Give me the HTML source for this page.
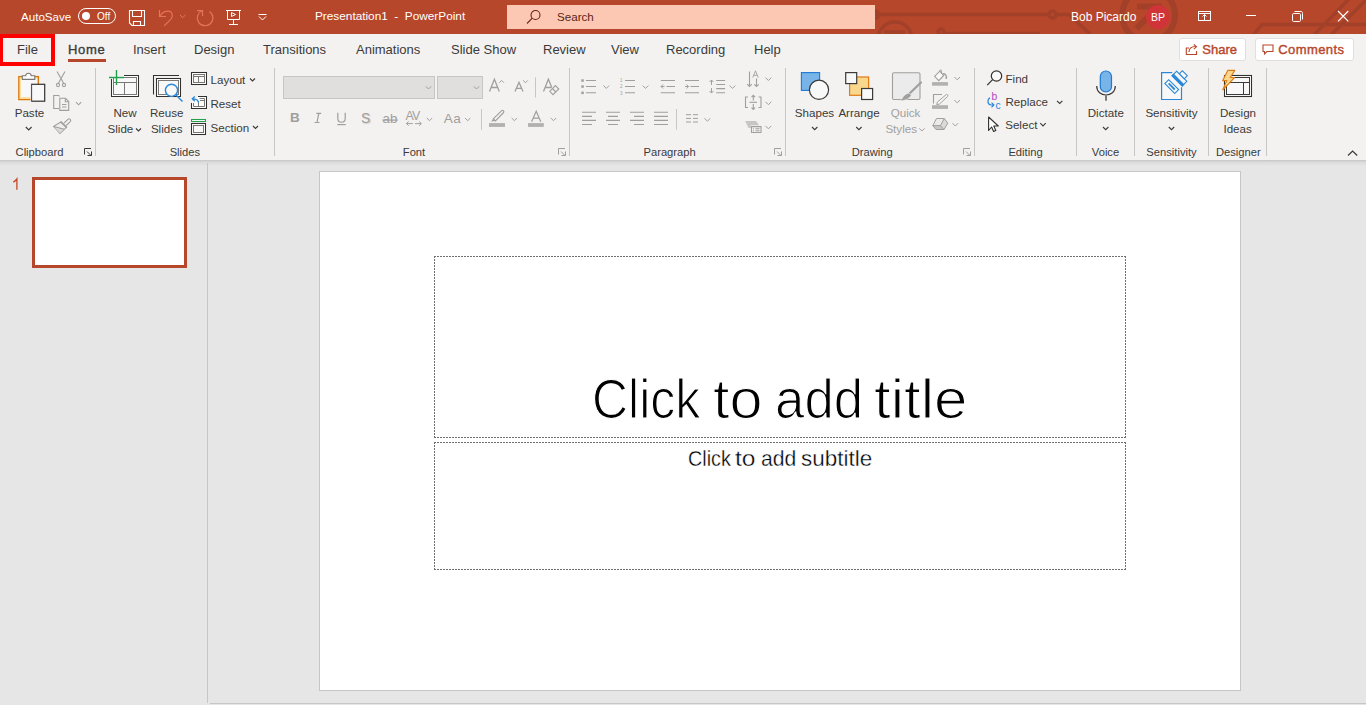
<!DOCTYPE html>
<html><head><meta charset="utf-8">
<style>
*{margin:0;padding:0;box-sizing:border-box}
html,body{width:1366px;height:705px;overflow:hidden;background:#e6e6e6;font-family:"Liberation Sans",sans-serif;position:relative}
.a{position:absolute;white-space:nowrap;line-height:1}
svg.a{overflow:visible}
#title{left:0;top:0;width:1366px;height:34px;background:#b7472a}
#tabs{left:0;top:34px;width:1366px;height:32px;background:#f3f2f1}
#ribbon{left:0;top:66px;width:1366px;height:94px;background:#f3f2f1}
#shadow{left:0;top:160px;width:1366px;height:6px;background:linear-gradient(#c6c6c6,#dcdcdc 40%,#e6e6e6)}
.tt{color:#fff;font-size:12px}
.tab{font-size:13px;color:#3b3a39;top:43px}
.t{font-size:11.6px;color:#3b3a39}
.g{font-size:11.2px;color:#3b3a39;top:147px}
.sep{position:absolute;width:1px;background:#c8c6c4;top:68px;height:88px}
.dis{color:#a19f9d}
.chev{position:absolute}
</style></head><body>
<div id="title" class="a"></div>
<div id="tabs" class="a"></div>
<div id="ribbon" class="a"></div>
<div id="shadow" class="a"></div>

<!-- ===== TITLE BAR ===== -->

<!-- title bar pattern -->
<svg class="a" style="left:0;top:0" width="1366" height="34">
<defs><clipPath id="tb"><rect x="875" y="0" width="491" height="34"/></clipPath></defs>
<g clip-path="url(#tb)" fill="none" stroke="#a2402a" stroke-width="3.5">
<path d="M870 14.5 H1049"/>
<circle cx="1052.5" cy="14.5" r="3.5"/>
<path d="M1056 14.5 H1069 L1090 34"/>
<circle cx="875.5" cy="14.5" r="3.5"/>
<circle cx="895" cy="39" r="17"/>
<path d="M884 32 H905"/>
<circle cx="941" cy="32" r="3"/>
<path d="M944 33.5 H1040"/>
<circle cx="1148.6" cy="15" r="26.4" stroke-width="6"/>
<path d="M1136.5 28.5 L1158 7 M1137 6.5 H1162" stroke-width="6"/>
<path d="M1251.5 37 L1262 24.5 H1370"/>
<path d="M1313 36 L1350 -2 M1330 36 L1368 -2"/>
</g>
</svg>
<div class="a tt" style="left:21px;top:11px;font-size:11.6px">AutoSave</div>

<div class="a" style="left:78px;top:8px;width:38px;height:16px;border:1px solid #fff;border-radius:8px"></div>
<div class="a" style="left:82px;top:12px;width:8px;height:8px;border-radius:50%;background:#fff"></div>
<div class="a tt" style="left:97px;top:12px;font-size:10px">Off</div>

<!-- QAT icons -->
<svg class="a" style="left:128px;top:9px" width="18" height="18" viewBox="0 0 18 18">
<g fill="none" stroke="#fff" stroke-width="1.1">
<path d="M1.5 1.5 H16.5 V16.5 H4 L1.5 14 Z"/>
<path d="M4.5 1.5 V7.5 H13.5 V1.5"/>
<path d="M5.5 16.5 V12.5 H12.5 V16.5"/>
</g></svg>
<svg class="a" style="left:0;top:0" width="260" height="34">
<g fill="none" stroke="#e8735c" stroke-width="1.2">
<path d="M159.5 10 V16.5 H166"/>
<path d="M160.3 15.8 C163 10.5 172.5 8.5 172.3 15.8 C172.2 18 171 19.3 169.8 20.4 L164.2 25.8"/>
<path d="M180 15 L182.7 17.7 L185.4 15" stroke-width="1"/>
<path d="M197 10.6 H202.5 V16"/>
<path d="M209.5 11.5 A7.8 7.8 0 1 1 202 10.8"/>
</g></svg>
<svg class="a" style="left:0;top:0" width="280" height="34">
<g fill="none" stroke="#fff" stroke-width="1">
<path d="M226 10.5 H241"/>
<path d="M227.5 10.5 V19.5 H239.5 V10.5"/>
<path d="M233.5 19.5 V24.5 M229 24.5 H238"/>
<path d="M231.5 12.5 L235.5 14.5 L231.5 16.5 Z"/>
<path d="M258.5 14.5 H266.5"/>
<path d="M259 16.5 L262.5 20 L266 16.5"/>
</g></svg>
<div class="a tt" style="left:315px;top:11px;font-size:11.8px">Presentation1&nbsp; -&nbsp; PowerPoint</div>
<div class="a" style="left:507px;top:5px;width:368px;height:24px;background:#fcc8b4"></div>
<svg class="a" style="left:526px;top:9px" width="16" height="16" viewBox="0 0 16 16">
<g fill="none" stroke="#6b2413" stroke-width="1.1">
<circle cx="9.5" cy="6" r="4.5"/>
<path d="M6.3 9.2 L1 14.5"/>
</g></svg>
<div class="a" style="left:557px;top:11px;font-size:11.6px;color:#5e1f10">Search</div>
<div class="a tt" style="left:1071px;top:11px;font-size:12px">Bob Picardo</div>
<div class="a" style="left:1146px;top:5px;width:24px;height:24px;border-radius:50%;background:#d13438"></div>
<div class="a" style="left:1146px;top:12px;width:24px;text-align:center;font-size:10.5px;color:#fff">BP</div>
<svg class="a" style="left:0;top:0" width="1366" height="34">
<g fill="none" stroke="#fff" stroke-width="1">
<rect x="1198.5" y="11.5" width="12" height="9"/>
<path d="M1199 13.5 H1210"/>
<path d="M1204.5 20.5 V14.5 M1202.5 16.5 L1204.5 14.5 L1206.5 16.5"/>
</g></svg>
<div class="a" style="left:1246px;top:15px;width:10px;height:1px;background:#fff"></div>
<svg class="a" style="left:0;top:0" width="1366" height="34">
<g fill="none" stroke="#fff" stroke-width="1">
<rect x="1292.5" y="13.5" width="8" height="8" rx="1.2"/>
<path d="M1294.5 11.5 H1300 A1.8 1.8 0 0 1 1302.5 13.5 V19.5"/>
<path d="M1338 11 L1348.3 21.3 M1348.3 11 L1338 21.3" stroke-width="1.2"/>
</g></svg>



<!-- ===== TABS ===== -->
<div class="a tab" style="left:17px">File</div>
<div class="a tab" style="left:68px;letter-spacing:0.7px;-webkit-text-stroke:0.35px #3b3a39">Home</div>
<div class="a" style="left:68px;top:59px;width:38px;height:3px;background:#b7472a"></div>
<div class="a tab" style="left:133px">Insert</div>
<div class="a tab" style="left:194px">Design</div>
<div class="a tab" style="left:263px">Transitions</div>
<div class="a tab" style="left:356px">Animations</div>
<div class="a tab" style="left:451px">Slide Show</div>
<div class="a tab" style="left:543px">Review</div>
<div class="a tab" style="left:611px">View</div>
<div class="a tab" style="left:666px">Recording</div>
<div class="a tab" style="left:754px">Help</div>
<!-- red File highlight -->
<div class="a" style="left:-1px;top:34px;width:56px;height:32px;border:4px solid #f00"></div>


<!-- ===== RIBBON ===== -->
<div class="a" style="left:95px;top:68px;width:1px;height:88px;background:#c8c6c4"></div>
<div class="a" style="left:274px;top:68px;width:1px;height:88px;background:#c8c6c4"></div>
<div class="a" style="left:569px;top:68px;width:1px;height:88px;background:#c8c6c4"></div>
<div class="a" style="left:785px;top:68px;width:1px;height:88px;background:#c8c6c4"></div>
<div class="a" style="left:974px;top:68px;width:1px;height:88px;background:#c8c6c4"></div>
<div class="a" style="left:1076px;top:68px;width:1px;height:88px;background:#c8c6c4"></div>
<div class="a" style="left:1134px;top:68px;width:1px;height:88px;background:#c8c6c4"></div>
<div class="a" style="left:1208px;top:68px;width:1px;height:88px;background:#c8c6c4"></div>
<div class="a" style="left:1266px;top:68px;width:1px;height:88px;background:#c8c6c4"></div>
<div class="a" style="left:-0.5px;top:147px;width:80px;text-align:center;font-size:11.2px;color:#3b3a39">Clipboard</div>
<div class="a" style="left:144.9px;top:147px;width:80px;text-align:center;font-size:11.2px;color:#3b3a39">Slides</div>
<div class="a" style="left:374.0px;top:147px;width:80px;text-align:center;font-size:11.2px;color:#3b3a39">Font</div>
<div class="a" style="left:629.6px;top:147px;width:80px;text-align:center;font-size:11.2px;color:#3b3a39">Paragraph</div>
<div class="a" style="left:832.2px;top:147px;width:80px;text-align:center;font-size:11.2px;color:#3b3a39">Drawing</div>
<div class="a" style="left:985.5px;top:147px;width:80px;text-align:center;font-size:11.2px;color:#3b3a39">Editing</div>
<div class="a" style="left:1065.5px;top:147px;width:80px;text-align:center;font-size:11.2px;color:#3b3a39">Voice</div>
<div class="a" style="left:1131.5px;top:147px;width:80px;text-align:center;font-size:11.2px;color:#3b3a39">Sensitivity</div>
<div class="a" style="left:1198.3px;top:147px;width:80px;text-align:center;font-size:11.2px;color:#3b3a39">Designer</div>
<div class="a" style="left:-10.5px;top:107px;width:80px;text-align:center;font-size:11.6px;color:#3b3a39">Paste</div>
<div class="a" style="left:85.0px;top:107px;width:80px;text-align:center;font-size:11.6px;color:#3b3a39">New</div>
<div class="a" style="left:107.5px;top:123px;font-size:11.6px;color:#3b3a39;">Slide</div>
<div class="a" style="left:126.69999999999999px;top:107px;width:80px;text-align:center;font-size:11.6px;color:#3b3a39">Reuse</div>
<div class="a" style="left:126.69999999999999px;top:123px;width:80px;text-align:center;font-size:11.6px;color:#3b3a39">Slides</div>
<div class="a" style="left:210.5px;top:74px;font-size:11.6px;color:#3b3a39;">Layout</div>
<div class="a" style="left:210.5px;top:97.5px;font-size:11.6px;color:#3b3a39;">Reset</div>
<div class="a" style="left:210.5px;top:122px;font-size:11.6px;color:#3b3a39;">Section</div>
<svg class="a" style="left:0;top:0" width="1366" height="165">
<!-- chevrons -->
<g fill="none" stroke="#3b3a39" stroke-width="1.1">
<path d="M25.8 127 L28.7 129.9 L31.6 127"/>
<path d="M136 128.5 L138.5 131 L141 128.5"/>
<path d="M250 78.5 L252.5 81 L255 78.5"/>
<path d="M253 126 L255.5 128.5 L258 126"/>
</g>
<!-- Paste -->
<rect x="18.8" y="76.6" width="19.6" height="23" fill="#fde0a4" stroke="#d9780f" stroke-width="1.3"/>
<rect x="21" y="78.5" width="16" height="18.5" fill="#f8f8f8"/>
<path d="M22.3 79.4 V75.7 H25.7 C26 72.5 30.8 72.5 31.2 75.7 H34.8 V79.4 Z" fill="#fff" stroke="#7a7876" stroke-width="1.1"/>
<rect x="31.5" y="84.3" width="13.2" height="16.9" fill="#f8f8f8" stroke="#323130" stroke-width="1.2"/>
<path d="M30.8 84 V101.8" stroke="#fff" stroke-width="0.6"/>
<!-- disabled clipboard icons -->
<g fill="none" stroke="#a19f9d" stroke-width="1.1">
<path d="M57 71.5 L63.5 83 M65 71.5 L58.5 83"/>
<circle cx="58" cy="85" r="1.6"/><circle cx="64" cy="85" r="1.6"/>
<path d="M59.5 96.5 L58.8 95.5 H53.7 V108.5 H59"/>
<path d="M59.8 98.3 H65.5 L68.7 101.5 V110.4 H59.8 Z"/>
<path d="M65.3 98.5 V101.8 H68.5"/>
<path d="M62 104.5 H66.5 M62 107 H66.5"/>
<path d="M76 102.2 L78.6 104.8 L81.2 102.2"/>
<path d="M64 123.2 L67.9 119.3 A1.6 1.6 0 0 1 70.2 121.6 L66.3 125.5" fill="#f3f2f1"/>
<path d="M60.9 122 L66.5 127.3 L60 133.5 L53.6 126.3 Z" fill="#efeeed"/>
<path d="M55 128 L60 133 L65 128.5 Z" fill="#dcdad8" stroke="none"/>
<path d="M53.8 126.5 L64.3 129.3"/>
<path d="M60.6 121.7 L66.8 127.6" stroke-width="1.6"/>
</g>
<defs><path id="launch" d="M0.5 6.5 V0.5 H7 M3 3.5 L7.2 7.7 M7.5 3.5 V7.5 H3.5" fill="none" stroke="#3b3a39" stroke-width="1"/><path id="launch2" d="M0.5 6.5 V0.5 H7 M3 3.5 L7.2 7.7 M7.5 3.5 V7.5 H3.5" fill="none" stroke="#a19f9d" stroke-width="1"/></defs>
<use href="#launch" x="84" y="148"/><g stroke="#a19f9d"><use href="#launch2" x="558" y="148"/><use href="#launch2" x="774" y="148"/><use href="#launch2" x="963" y="148"/></g>
<!-- New slide -->
<rect x="112" y="76" width="26" height="20" fill="#fff"/>
<path d="M124 75.5 H138.5 V96.5 H111.5 V79" fill="none" stroke="#323130" stroke-width="1.05"/>
<rect x="113.5" y="77.5" width="23" height="17" fill="#f8f8f8" stroke="#7a7876" stroke-width="1"/>
<path d="M113.5 82.5 H136.5 M124.5 82.5 V94.5" stroke="#7a7876" stroke-width="1"/>
<path d="M109 77.5 H124 M116.5 70 V85" stroke="#23a04b" stroke-width="1.4"/>
<!-- Reuse slides -->
<path d="M153.5 94.6 V75.5 H179" fill="none" stroke="#323130" stroke-width="1.05"/>
<rect x="156" y="78" width="25" height="19" fill="#fff"/>
<rect x="156.5" y="78.5" width="24" height="18" fill="none" stroke="#323130" stroke-width="1.05"/>
<rect x="158.5" y="80.5" width="20" height="14" fill="#f8f8f8" stroke="#7a7876" stroke-width="1"/>
<circle cx="171.5" cy="90.3" r="6.1" fill="#f8f8f8" stroke="#2b88d8" stroke-width="1.4"/>
<path d="M175.8 94.8 L182.5 101.5" stroke="#2b88d8" stroke-width="1.4"/>
<!-- Layout / Reset / Section -->
<rect x="191.5" y="72.5" width="15" height="12" fill="#fff" stroke="#323130" stroke-width="1.05"/>
<rect x="193.5" y="74.5" width="11" height="8" fill="#f8f8f8" stroke="#7a7876" stroke-width="1"/>
<path d="M193.5 76.5 H204.5 M198.5 76.5 V82.5" stroke="#7a7876" stroke-width="1"/>
<path d="M198 96.5 H206.5 V108.5 H191.5 V103" fill="#fff" stroke="#323130" stroke-width="1.05"/>
<path d="M193.5 103 V106.5 H204.5 V98.5 H199.5 M198.5 106.5 V101 M204.5 100.5 H200" fill="none" stroke="#7a7876" stroke-width="1"/>
<path d="M198.3 102.5 C198.3 99.5 196.5 98.8 192.5 98.8 M194.8 96.5 L192.3 98.8 L194.8 101.2" fill="none" stroke="#2b88d8" stroke-width="1.3"/>
<rect x="191.5" y="119.5" width="14" height="2" fill="#fff" stroke="#23a04b" stroke-width="1.05"/>
<rect x="191.5" y="123.5" width="14" height="11" fill="#fff" stroke="#323130" stroke-width="1.05"/>
<rect x="193.5" y="125.5" width="10" height="7" fill="#f8f8f8" stroke="#7a7876" stroke-width="1"/>
</svg>
<svg class="a" style="left:0;top:0" width="1366" height="165">
<!-- Font group -->
<rect x="283.5" y="76.5" width="151" height="22" fill="#e1dfdd" stroke="#c8c6c4" stroke-width="1"/>
<rect x="437.5" y="76.5" width="45" height="22" fill="#e1dfdd" stroke="#c8c6c4" stroke-width="1"/>
<g fill="none" stroke="#a19f9d" stroke-width="1">
<path d="M425.8 86.3 L428.5 89 L431.2 86.3"/>
<path d="M473.8 86.3 L476.5 89 L479.2 86.3"/>
</g>
<g fill="none" stroke="#a19f9d" stroke-width="1.3">
<path d="M489.5 91.5 L494.4 79.3 L499.3 91.5 M491.2 87.5 H497.6"/>
<path d="M499.3 82.7 L501.6 80.4 L503.9 82.7" stroke-width="1"/>
<path d="M515 91.5 L519 82.3 L523 91.5 M516.5 88.3 H521.5"/>
<path d="M523.1 80.4 L525.5 82.7 L527.8 80.4" stroke-width="1"/>
<path d="M543.5 91.5 L548.4 79.3 L551.8 87.5 M545.2 87.5 H551.5"/>
<path d="M549.8 91.3 L555.4 85.6 L558.8 89 L553 94.7 Z M552.5 88.5 L555.8 92" stroke-width="1.1"/>
</g>
<path d="M535.5 77.3 V97.5" stroke="#c8c6c4" stroke-width="1"/>
<path d="M481.5 109 V129.7" stroke="#c8c6c4" stroke-width="1"/>
<g fill="none" stroke="#a19f9d" stroke-width="1.2">
<path d="M316.3 113.4 H321.2 M314.6 122.5 H319.5 M318.8 113.4 L317 122.5"/>
<path d="M337.8 112.8 V118.5 C337.8 123.5 345.2 123.5 345.2 118.5 V112.8"/>
<path d="M337.3 124.6 H345.7"/>
<path d="M382.3 120.1 H397.7"/>
<path d="M406.5 123.6 H412.8 M408.6 121.5 L406.5 123.6 L408.6 125.7 M415 123.6 H421.3 M419.2 121.5 L421.3 123.6 L419.2 125.7" stroke-width="1"/>
</g>
<g fill="none" stroke="#a19f9d" stroke-width="1">
<path d="M426.8 118 L429.5 120.7 L432.2 118"/>
<path d="M465 118 L467.7 120.7 L470.4 118"/>
<path d="M511.7 118 L514.4 120.7 L517.1 118"/>
<path d="M550.8 118 L553.5 120.7 L556.2 118"/>
</g>
<path d="M493.3 118.8 L501.7 110.6 C502.7 109.6 504.6 111.4 503.6 112.5 L495.4 120.9 Z" fill="#f3f2f1" stroke="#a19f9d" stroke-width="1.1"/>
<path d="M493.3 118.8 L491 121.6 L495.4 120.9 Z" fill="#a19f9d"/>
<rect x="489" y="123.1" width="16" height="3.8" fill="#b3b0ad"/>
<path d="M531.6 121.8 L536.2 111.2 L540.8 121.8 M533.2 118.2 H539.2" fill="none" stroke="#a19f9d" stroke-width="1.2"/>
<rect x="528" y="123.1" width="15.8" height="3.8" fill="#b3b0ad"/>
</svg>
<div class="a" style="left:290px;top:111px;font-size:13.5px;font-weight:bold;color:#a19f9d">B</div>
<div class="a" style="left:361px;top:111px;font-size:14px;color:#a19f9d;text-shadow:1px 1px 1px #d0cecc">S</div>
<div class="a" style="left:382.5px;top:111.5px;font-size:13.3px;color:#a19f9d">ab</div>
<div class="a" style="left:405.5px;top:109.5px;font-size:12.4px;color:#a19f9d;letter-spacing:-0.8px">AV</div>
<div class="a" style="left:443.8px;top:112px;font-size:13.5px;color:#a19f9d;letter-spacing:0.5px">Aa</div>
<svg class="a" style="left:0;top:0" width="1366" height="165">
<!-- Paragraph group -->
<g fill="#a19f9d">
<rect x="581.3" y="79.3" width="2.5" height="2.5"/><rect x="581.3" y="85.3" width="2.5" height="2.5"/><rect x="581.3" y="91.6" width="2.5" height="2.5"/>
</g>
<g fill="none" stroke="#a19f9d" stroke-width="1.1">
<path d="M585.9 80.5 H596 M585.9 86.5 H596 M585.9 92.8 H596"/>
<path d="M625 80.5 H635 M625 86.5 H635 M625 92.8 H635"/>
<path d="M660.8 80.5 H675 M666.5 86.5 H675 M660.8 92.8 H675"/>
<path d="M664.5 86.5 H661 M663 84.5 L661 86.5 L663 88.5" stroke-width="1"/>
<path d="M685 80.5 H699 M690.5 86.5 H699 M685 92.8 H699"/>
<path d="M685 86.5 H688.5 M686.6 84.5 L688.6 86.5 L686.6 88.5" stroke-width="1"/>
<path d="M716.2 80.5 H725.1 M716.2 84.5 H725.1 M716.2 88.6 H725.1 M716.2 92.8 H725.1"/>
<path d="M711.5 80 V85 M709.5 82 L711.5 80 L713.5 82 M711.5 88 V93 M709.5 91 L711.5 93 L713.5 91" stroke-width="1"/>
<path d="M582 112.3 H596 M582 116.4 H592 M582 120.4 H596 M582 124.5 H592"/>
<path d="M606 112.3 H620 M608 116.4 H618 M606 120.4 H620 M608 124.5 H618"/>
<path d="M630 112.3 H644 M634 116.4 H644 M630 120.4 H644 M634 124.5 H644"/>
<path d="M654 112.3 H668 M654 116.4 H668 M654 120.4 H668 M654 124.5 H668"/>
<path d="M686 114.7 H691 M686 118.4 H691 M686 122 H691 M693 114.7 H698 M693 118.4 H698 M693 122 H698" stroke-width="1"/>
</g>
<g fill="#a19f9d" font-family="Liberation Sans" font-size="4.5">
<text x="620" y="82">1</text><text x="620" y="88.2">2</text><text x="620" y="94.5">3</text>
</g>
<path d="M676.5 109 V129.7" stroke="#c8c6c4" stroke-width="1"/>
<g fill="none" stroke="#a19f9d" stroke-width="1">
<path d="M603.4 85.5 L606.3 88.4 L609.2 85.5"/>
<path d="M642.6 85.5 L645.5 88.4 L648.4 85.5"/>
<path d="M729.6 85.5 L732.5 88.4 L735.4 85.5"/>
<path d="M765.5 77.6 L768.4 80.5 L771.3 77.6"/>
<path d="M765.5 101.8 L768.4 104.7 L771.3 101.8"/>
<path d="M765.5 125.9 L768.4 128.8 L771.3 125.9"/>
<path d="M704.5 118.3 L707.4 121.2 L710.3 118.3"/>
</g>
<!-- text direction -->
<g fill="none" stroke="#a19f9d" stroke-width="1.1">
<path d="M749.5 71.5 V86.5 M747.2 84.2 L749.5 86.5 L751.8 84.2"/>
<path d="M752.8 77.5 L755.5 70.8 L758.2 77.5 M753.7 75.3 H757.3" stroke-width="0.9"/>
<path d="M756.5 78.5 V86.5 M754.3 84.3 L756.5 86.5 L758.7 84.3"/>
<!-- align text -->
<path d="M748 97 H745.5 V107.5 H748 M758.5 97 H761 V107.5 H758.5"/>
<path d="M749.5 102.3 H757"/>
<path d="M753.3 95.3 V100.5 M751.5 97.1 L753.3 95.3 L755.1 97.1 M753.3 104 V109.5 M751.5 107.7 L753.3 109.5 L755.1 107.7"/>
<!-- smartart -->
<path d="M751.5 126.6 V132.5 H761 V126.6 Z M753 128.7 H754 M755.5 128.7 H759.5 M753 130.7 H754 M755.5 130.7 H759.5"/>
</g>
<path d="M745.2 121 H756 L759.2 125.2 H750.8 V128 H748.5 Z" fill="#c8c6c4"/>
</svg>
<div class="a" style="left:774.5px;top:107px;width:80px;text-align:center;font-size:11.6px;color:#3b3a39">Shapes</div>
<div class="a" style="left:819.0px;top:107px;width:80px;text-align:center;font-size:11.6px;color:#3b3a39">Arrange</div>
<div class="a" style="left:865.6px;top:107px;width:80px;text-align:center;font-size:11.6px;color:#a19f9d">Quick</div>
<div class="a" style="left:885.4px;top:123px;font-size:11.6px;color:#a19f9d;">Styles</div>
<div class="a" style="left:1005.5px;top:73.2px;font-size:11.6px;color:#3b3a39;">Find</div>
<div class="a" style="left:1005.5px;top:96.2px;font-size:11.6px;color:#3b3a39;">Replace</div>
<div class="a" style="left:1005.2px;top:118.8px;font-size:11.6px;color:#3b3a39;">Select</div>
<div class="a" style="left:1065.8px;top:107px;width:80px;text-align:center;font-size:11.6px;color:#3b3a39">Dictate</div>
<div class="a" style="left:1131.5px;top:107px;width:80px;text-align:center;font-size:11.6px;color:#3b3a39">Sensitivity</div>
<div class="a" style="left:1198.0px;top:107px;width:80px;text-align:center;font-size:11.6px;color:#3b3a39">Design</div>
<div class="a" style="left:1197.6px;top:123px;width:80px;text-align:center;font-size:11.6px;color:#3b3a39">Ideas</div>
<svg class="a" style="left:0;top:0" width="1366" height="165">
<g fill="none" stroke="#3b3a39" stroke-width="1.1">
<path d="M812 127 L814.7 129.7 L817.4 127"/>
<path d="M856.2 127 L858.9 129.7 L861.6 127"/>
<path d="M1057 100.8 L1059.7 103.5 L1062.4 100.8"/>
<path d="M1040.3 123.2 L1043 125.9 L1045.7 123.2"/>
<path d="M1103 127 L1105.7 129.7 L1108.4 127"/>
<path d="M1168.8 127 L1171.5 129.7 L1174.2 127"/>
<path d="M1348 155.5 L1352.6 151 L1357.2 155.5" stroke-width="1.2"/>
</g>
<g fill="none" stroke="#a19f9d" stroke-width="1">
<path d="M919.2 128.3 L921.9 131 L924.6 128.3"/>
<path d="M954.4 77 L957.2 79.8 L960 77"/>
<path d="M954.4 100.1 L957.2 102.9 L960 100.1"/>
<path d="M952.5 123.2 L955.3 126 L958.1 123.2"/>
</g>
<!-- Shapes -->
<rect x="801.4" y="72.6" width="18.2" height="17.8" fill="#78b4e8" stroke="#1f78d1" stroke-width="1.1"/>
<circle cx="819" cy="89.8" r="9.6" fill="#f8f8f8" stroke="#3b3a39" stroke-width="1.2"/>
<!-- Arrange -->
<rect x="849.6" y="77" width="19" height="18.3" fill="#f9d88e" stroke="#e07b14" stroke-width="1.2"/>
<rect x="845.7" y="72.6" width="11" height="11" fill="#f8f8f8" stroke="#3b3a39" stroke-width="1.2"/>
<rect x="861.6" y="88.5" width="11" height="11" fill="#f8f8f8" stroke="#3b3a39" stroke-width="1.2"/>
<!-- Quick styles -->
<rect x="892.5" y="72.7" width="27.5" height="26.8" rx="1.5" fill="#ebebeb" stroke="#a19f9d" stroke-width="1.1"/>
<path d="M921 82.5 L907.5 95.5" stroke="#a19f9d" stroke-width="2.2" stroke-linecap="round"/>
<path d="M909.5 93.2 C905.5 93.2 903 96.5 900.5 101 C905 100.5 909.5 99 911.3 95.3 Z" fill="#a19f9d" stroke="#f3f2f1" stroke-width="0.6"/>
<!-- shape fill / outline / effects -->
<path d="M934.6 76.3 L939.7 71.2 L943.8 75.5 L938.8 80.7 Z" fill="#f8f8f8" stroke="#a19f9d" stroke-width="1.1"/>
<path d="M939.7 71.2 C939.7 69.5 941.5 69.5 941.5 71.2 V74" fill="none" stroke="#a19f9d" stroke-width="1"/>
<path d="M943 74 C945.5 73 946.8 76 946.3 79" fill="none" stroke="#a19f9d" stroke-width="1.4"/>
<rect x="932" y="82.1" width="16" height="3.6" fill="#b3b0ad"/>
<path d="M933.5 103.5 V94.5 H942" fill="none" stroke="#a19f9d" stroke-width="1.1"/>
<path d="M946 94.8 C947 93.8 948.6 95.3 947.6 96.4 L939.5 104 L936.8 104.6 L937.4 102 Z" fill="#f8f8f8" stroke="#a19f9d" stroke-width="1"/>
<rect x="932" y="105.2" width="16" height="3.7" fill="#b3b0ad"/>
<path d="M932.8 125.6 L936.5 118.5 H944.3 L947.8 123.2 L944 129.5 H936 Z" fill="#ebebeb"/>
<path d="M932.8 125.6 L936 129.5 H944 L940.5 125.6 Z" fill="#c8c6c4"/>
<path d="M940.5 125.6 L944 129.5 L947.8 123.2 L944.3 118.5 Z" fill="#dcdad8"/>
<path d="M932.8 125.6 L936.5 118.5 H944.3 L947.8 123.2 L944 129.5 H936 Z M932.8 125.6 H940.5 L944.3 118.5 M940.5 125.6 L944 129.5" fill="none" stroke="#a19f9d" stroke-width="1" stroke-linejoin="round"/>
<!-- Find -->
<circle cx="996.5" cy="76" r="5.2" fill="#f8f8f8" stroke="#323130" stroke-width="1.2"/>
<path d="M992.6 79.6 L987.2 85.2" stroke="#323130" stroke-width="1.2"/>
<!-- Replace -->
<path d="M990 97.8 C987 99.5 987.3 104.5 991 105 H994 M991.5 102.6 L993.9 105 L991.5 107.4" fill="none" stroke="#2b88d8" stroke-width="1.2"/>
<!-- Select -->
<path d="M988.6 117 V130.5 L991.6 127 L993.6 131.5 L995.8 130.5 L993.8 126 L998.3 126 Z" fill="#fff" stroke="#323130" stroke-width="1.1" stroke-linejoin="round"/>
<!-- Mic -->
<rect x="1100.3" y="71" width="11.2" height="21" rx="5.6" fill="#78b4e8" stroke="#1f78d1" stroke-width="1.2"/>
<path d="M1096.7 86 C1096.7 98 1115.3 98 1115.3 86" fill="none" stroke="#3b3a39" stroke-width="1.2"/>
<path d="M1106 95.5 V100.8" stroke="#3b3a39" stroke-width="1.3"/>
<!-- Sensitivity -->
<path d="M1172.2 72.6 H1161.6 V99.5 H1181.5 V87.3" fill="#f8f8f8" stroke="#2b88d8" stroke-width="1.2"/>
<g transform="rotate(45 1176 82)" stroke="#2b88d8" stroke-width="1.1" fill="#f8f8f8">
<rect x="1169.2" y="85.5" width="14" height="5.5"/>
<path d="M1171.8 88.2 H1180.4" stroke-width="1.8"/>
<rect x="1168.8" y="73.9" width="14.4" height="6.5"/>
<rect x="1168.8" y="78.3" width="14.4" height="2.1" fill="#2b88d8"/>
<rect x="1172.5" y="69.5" width="7" height="4.3"/>
</g>
<!-- Designer -->
<rect x="1224.5" y="75.5" width="27" height="21" fill="#fff" stroke="#323130" stroke-width="1.1"/>
<rect x="1226.5" y="77.5" width="23" height="17" fill="#f8f8f8" stroke="#3b3a39" stroke-width="1"/>
<path d="M1226.5 82.5 H1249.5 M1243.5 82.5 V94.5" stroke="#3b3a39" stroke-width="1"/>
<path d="M1227.7 70.4 L1234.8 70.4 L1230.2 77.5 L1234.6 77.5 L1222.8 89.8 L1226.8 80.6 L1222.7 80.6 Z" fill="#f9d88e" stroke="#e07b14" stroke-width="1.1" stroke-linejoin="round"/>
</svg>
<div class="a" style="left:991.5px;top:91.5px;font-size:10.3px;color:#b146c2">b</div>
<div class="a" style="left:995.6px;top:100.5px;font-size:10.3px;color:#2b88d8">c</div>
<!-- Share / Comments -->
<div class="a" style="left:1178.5px;top:37.5px;width:67px;height:23px;background:#fff;border:1px solid #e1dfdd;border-radius:3px"></div>
<div class="a" style="left:1254.5px;top:37.5px;width:99px;height:23px;background:#fff;border:1px solid #e1dfdd;border-radius:3px"></div>
<svg class="a" style="left:0;top:0" width="1366" height="70">
<g fill="none" stroke="#b7472a" stroke-width="1.1">
<path d="M1189 48 H1186.3 V54.5 H1196.5 V51"/>
<path d="M1189 52 C1189 47.5 1192 46.5 1195.5 46.5 M1193.8 44.3 L1196.5 46.8 L1193.8 49.2"/>
<path d="M1263 45 H1273 V51.5 H1267 L1264.5 54 V51.5 H1263 Z"/>
</g></svg>
<div class="a" style="left:1202.3px;top:42.5px;font-size:13px;color:#b7472a;-webkit-text-stroke:0.4px #b7472a">Share</div>
<div class="a" style="left:1278.3px;top:42.5px;font-size:13px;letter-spacing:0.4px;color:#b7472a;-webkit-text-stroke:0.4px #b7472a">Comments</div>
<!-- RIBBON_ICONS -->
<!-- ===== MAIN ===== -->
<div class="a" style="left:207px;top:163px;width:1px;height:540px;background:#c6c6c6"></div>
<div class="a" style="left:210px;top:703px;width:1156px;height:1px;background:#c6c6c6"></div>
<svg class="a" style="left:0;top:170px" width="30" height="30"><path d="M13.2 12.3 C15 11.3 16 10.2 16.9 9 V19.8" fill="none" stroke="#c9441f" stroke-width="1.3"/></svg>
<div class="a" style="left:32px;top:177px;width:155px;height:91px;border:3px solid #b7472a;background:#fff"></div>
<div class="a" style="left:319px;top:171px;width:922px;height:520px;background:#fff;border:1px solid #c6c6c6"></div>
<div class="a" style="left:434px;top:256px;width:692px;height:1px;background:repeating-linear-gradient(to right,#707070 0 2px,transparent 2px 3px)"></div>
<div class="a" style="left:434px;top:437px;width:692px;height:1px;background:repeating-linear-gradient(to right,#707070 0 2px,transparent 2px 3px)"></div>
<div class="a" style="left:434px;top:256px;width:1px;height:182px;background:repeating-linear-gradient(to bottom,#707070 0 2px,transparent 2px 3px)"></div>
<div class="a" style="left:1125px;top:256px;width:1px;height:182px;background:repeating-linear-gradient(to bottom,#707070 0 2px,transparent 2px 3px)"></div>
<div class="a" style="left:434px;top:442px;width:692px;height:1px;background:repeating-linear-gradient(to right,#707070 0 2px,transparent 2px 3px)"></div>
<div class="a" style="left:434px;top:569px;width:692px;height:1px;background:repeating-linear-gradient(to right,#707070 0 2px,transparent 2px 3px)"></div>
<div class="a" style="left:434px;top:442px;width:1px;height:128px;background:repeating-linear-gradient(to bottom,#707070 0 2px,transparent 2px 3px)"></div>
<div class="a" style="left:1125px;top:442px;width:1px;height:128px;background:repeating-linear-gradient(to bottom,#707070 0 2px,transparent 2px 3px)"></div>

<div class="a" style="left:592px;top:372px;font-size:55px;color:#000;transform:scaleX(0.9090);transform-origin:0 0;-webkit-text-stroke:1.2px #fff">Click</div>
<div class="a" style="left:713px;top:372px;font-size:55px;color:#000;transform:scaleX(1.0790);transform-origin:0 0;-webkit-text-stroke:1.2px #fff">to</div>
<div class="a" style="left:775px;top:372px;font-size:55px;color:#000;transform:scaleX(0.9610);transform-origin:0 0;-webkit-text-stroke:1.2px #fff">add</div>
<div class="a" style="left:874px;top:372px;font-size:55px;color:#000;transform:scaleX(1.0920);transform-origin:0 0;-webkit-text-stroke:1.2px #fff">title</div>

<div class="a" style="left:687.5px;top:448px;font-size:22.5px;color:#000;transform:scaleX(0.8800);transform-origin:0 0;-webkit-text-stroke:0.35px #fff">Click</div>
<div class="a" style="left:735px;top:448px;font-size:22.5px;color:#000;transform:scaleX(1.0900);transform-origin:0 0;-webkit-text-stroke:0.35px #fff">to</div>
<div class="a" style="left:760.5px;top:448px;font-size:22.5px;color:#000;transform:scaleX(0.9400);transform-origin:0 0;-webkit-text-stroke:0.35px #fff">add</div>
<div class="a" style="left:800.5px;top:448px;font-size:22.5px;color:#000;transform:scaleX(0.9980);transform-origin:0 0;-webkit-text-stroke:0.35px #fff">subtitle</div>

</body></html>
